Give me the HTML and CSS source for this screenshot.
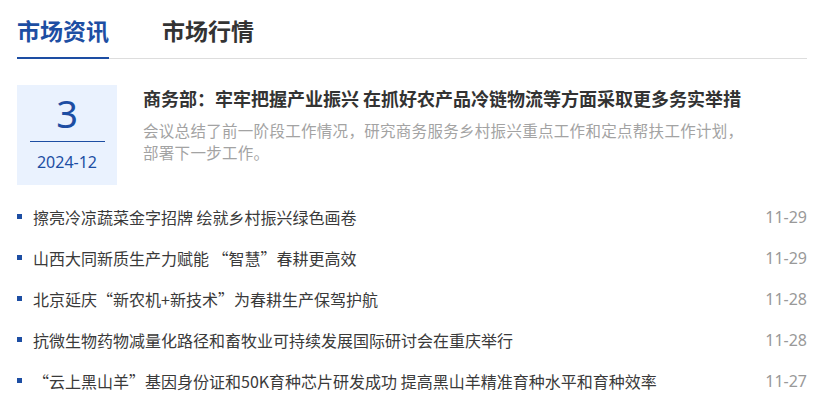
FILE: index.html
```html
<!DOCTYPE html>
<html lang="zh-CN">
<head>
    <meta charset="UTF-8">
    <meta name="viewport" content="width=device-width, initial-scale=1.0">
    <title>市场资讯</title>
    <link rel="stylesheet" href="styles.css">
</head>
<body>
    <div class="news-panel">
        <div class="tabs">
            <div class="tab active">市场资讯</div>
            <div class="tab">市场行情</div>
        </div>

        <div class="featured">
            <div class="date-box">
                <div class="day">3</div>
                <div class="divider"></div>
                <div class="month">2024-12</div>
            </div>
            <div class="featured-body">
                <div class="featured-title">商务部：牢牢把握产业振兴 在抓好农产品冷链物流等方面采取更多务实举措</div>
                <p class="featured-summary">会议总结了前一阶段工作情况，研究商务服务乡村振兴重点工作和定点帮扶工作计划，部署下一步工作。</p>
            </div>
        </div>

        <ul class="news-list">
            <li>
                <span class="dot"></span>
                <span class="news-title">擦亮冷凉蔬菜金字招牌 绘就乡村振兴绿色画卷</span>
                <span class="news-date">11-29</span>
            </li>
            <li>
                <span class="dot"></span>
                <span class="news-title">山西大同新质生产力赋能 “智慧”春耕更高效</span>
                <span class="news-date">11-29</span>
            </li>
            <li>
                <span class="dot"></span>
                <span class="news-title">北京延庆“新农机+新技术”为春耕生产保驾护航</span>
                <span class="news-date">11-28</span>
            </li>
            <li>
                <span class="dot"></span>
                <span class="news-title">抗微生物药物减量化路径和畜牧业可持续发展国际研讨会在重庆举行</span>
                <span class="news-date">11-28</span>
            </li>
            <li>
                <span class="dot"></span>
                <span class="news-title">“云上黑山羊”基因身份证和50K育种芯片研发成功 提高黑山羊精准育种水平和育种效率</span>
                <span class="news-date">11-27</span>
            </li>
        </ul>
    </div>
</body>
</html>
```

FILE: styles.css
```css
body {
    margin: 0;
    background: #fff;
    font-family: "Noto Sans CJK SC", "Noto Sans", sans-serif;
    color: #333;
}
.news-panel {
    padding: 0 20px 0 17px;
}

/* tabs */
.tabs {
    display: flex;
    gap: 53px;
    padding-top: 13px;
    border-bottom: 1px solid #ddd;
}
.tab {
    position: relative;
    font-size: 23px;
    font-weight: 700;
    line-height: 34px;
    padding-bottom: 11px;
    color: #333;
}
.tab.active {
    color: #1d4ea3;
}
.tab.active::after {
    content: "";
    position: absolute;
    left: 0;
    right: 0;
    bottom: -1px;
    height: 2px;
    background: #1d4ea3;
}

/* featured item */
.featured {
    display: flex;
    gap: 26px;
    margin-top: 26px;
}
.date-box {
    flex: 0 0 100px;
    height: 100px;
    box-sizing: border-box;
    padding-top: 9px;
    background: #eaf2fe;
    color: #1d4ea3;
    font-family: "Noto Sans", sans-serif;
    display: flex;
    flex-direction: column;
    align-items: center;
}
.day {
    font-size: 38px;
    line-height: 38px;
}
.divider {
    width: 75px;
    height: 1px;
    margin-top: 9px;
    background: #1d4ea3;
}
.month {
    font-size: 16px;
    line-height: 20px;
    margin-top: 10px;
}
.featured-body {
    width: 606px;
}
.featured-title {
    font-size: 18px;
    font-weight: 700;
    line-height: 26px;
    color: #333;
}
.featured-summary {
    margin: 8px 0 0;
    font-size: 15.5px;
    letter-spacing: 0.3px;
    line-height: 22px;
    color: #a3a3a3;
}

/* list */
.news-list {
    list-style: none;
    margin: 12px 0 0;
    padding: 0;
}
.news-list li {
    display: flex;
    align-items: center;
    height: 41px;
    font-size: 16px;
    line-height: 41px;
}
.dot {
    flex: 0 0 5px;
    height: 5px;
    margin: 0 11px 3px 0;
    background: #1d4ea3;
}
.news-title {
    flex: 1;
    color: #3a3a3a;
    white-space: nowrap;
    overflow: hidden;
}
.news-date {
    font-family: "Noto Sans", sans-serif;
    color: #999;
    margin-left: 20px;
}
```
